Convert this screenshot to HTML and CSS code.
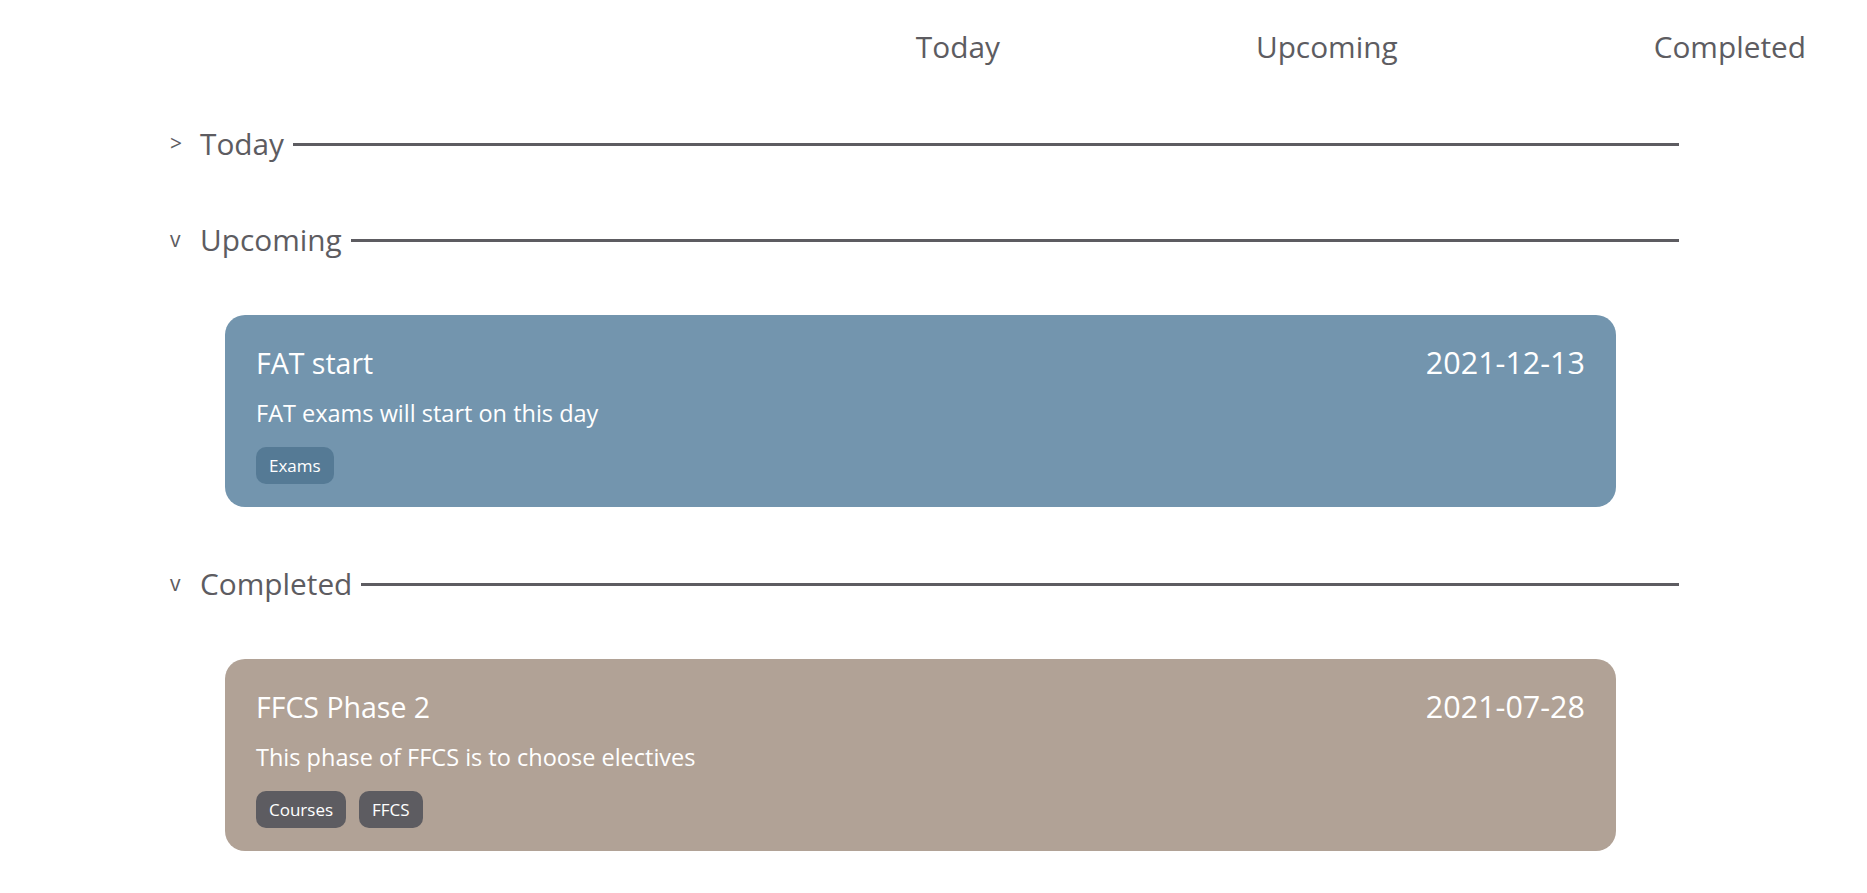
FILE: index.html
```html
<!DOCTYPE html>
<html lang="en">
<head>
<meta charset="utf-8">
<title>Events</title>
<link rel="stylesheet" href="styles.css">
</head>
<body>
<nav class="nav">
  <a class="nav-link">Today</a>
  <a class="nav-link">Upcoming</a>
  <a class="nav-link">Completed</a>
</nav>
<main class="sections">
  <section class="section">
    <div class="section-head">
      <span class="chevron">&gt;</span>
      <h2 class="section-title">Today</h2>
      <span class="rule"></span>
    </div>
  </section>
  <section class="section">
    <div class="section-head">
      <span class="chevron">v</span>
      <h2 class="section-title">Upcoming</h2>
      <span class="rule"></span>
    </div>
    <div class="section-body">
      <article class="card card-blue">
        <div class="card-top">
          <h3 class="card-title">FAT start</h3>
          <span class="card-date">2021-12-13</span>
        </div>
        <p class="card-desc">FAT exams will start on this day</p>
        <div class="tags">
          <span class="tag tag-blue">Exams</span>
        </div>
      </article>
    </div>
  </section>
  <section class="section">
    <div class="section-head">
      <span class="chevron">v</span>
      <h2 class="section-title">Completed</h2>
      <span class="rule"></span>
    </div>
    <div class="section-body">
      <article class="card card-sand">
        <div class="card-top">
          <h3 class="card-title">FFCS Phase 2</h3>
          <span class="card-date">2021-07-28</span>
        </div>
        <p class="card-desc">This phase of FFCS is to choose electives</p>
        <div class="tags">
          <span class="tag tag-gray">Courses</span>
          <span class="tag tag-gray">FFCS</span>
        </div>
      </article>
    </div>
  </section>
</main>
</body>
</html>
```
FILE: styles.css
```css
* { box-sizing: border-box; }
html, body { margin: 0; padding: 0; background: #ffffff; }
body {
  font-family: "Open Sans", "Noto Sans", sans-serif;
  color: #5d5c61;
}
.nav {
  height: 92px;
  display: flex;
  justify-content: flex-end;
  align-items: center;
  gap: 256px;
  padding-right: 61px;
}
.nav-link {
  font-size: 29.8px;
  color: #5d5c61;
  cursor: pointer;
}
.sections {
  padding: 27px 0 0 170px;
  width: 1679px;
  display: flex;
  flex-direction: column;
  gap: 48px;
}
.section-head {
  height: 48px;
  display: flex;
  align-items: center;
}
.chevron {
  width: 30px;
  font-size: 21px;
  line-height: 1;
  color: #5d5c61;
}
.section-title {
  margin: 0;
  font-size: 29.8px;
  font-weight: 400;
  color: #5d5c61;
}
.rule {
  flex: 1;
  height: 3px;
  background: #5d5c61;
  margin-left: 9px;
  margin-top: 2px;
}
.section-body {
  padding: 52px 0 4px 55px;
}
.card {
  width: 1391px;
  height: 192px;
  border-radius: 20px;
  padding: 27px 31px 0 31px;
  color: #ffffff;
}
.card-blue { background: #7395ae; }
.card-sand { background: #b1a296; }
.card-top {
  display: flex;
  justify-content: space-between;
  align-items: baseline;
}
.card-title {
  margin: 0;
  font-size: 28.5px;
  font-weight: 400;
  line-height: 40px;
}
.card-date {
  font-size: 30.5px;
  line-height: 40px;
}
.card-desc {
  margin: 14px 0 0 0;
  font-size: 23.5px;
  line-height: 32px;
}
.tags {
  display: flex;
  gap: 13px;
  margin-top: 18px;
}
.tag {
  height: 37px;
  padding: 0 13px;
  border-radius: 10px;
  font-size: 17px;
  display: flex;
  align-items: center;
  color: #ffffff;
}
.tag-blue { background: #557a95; }
.tag-gray { background: #5d5c61; }
```
